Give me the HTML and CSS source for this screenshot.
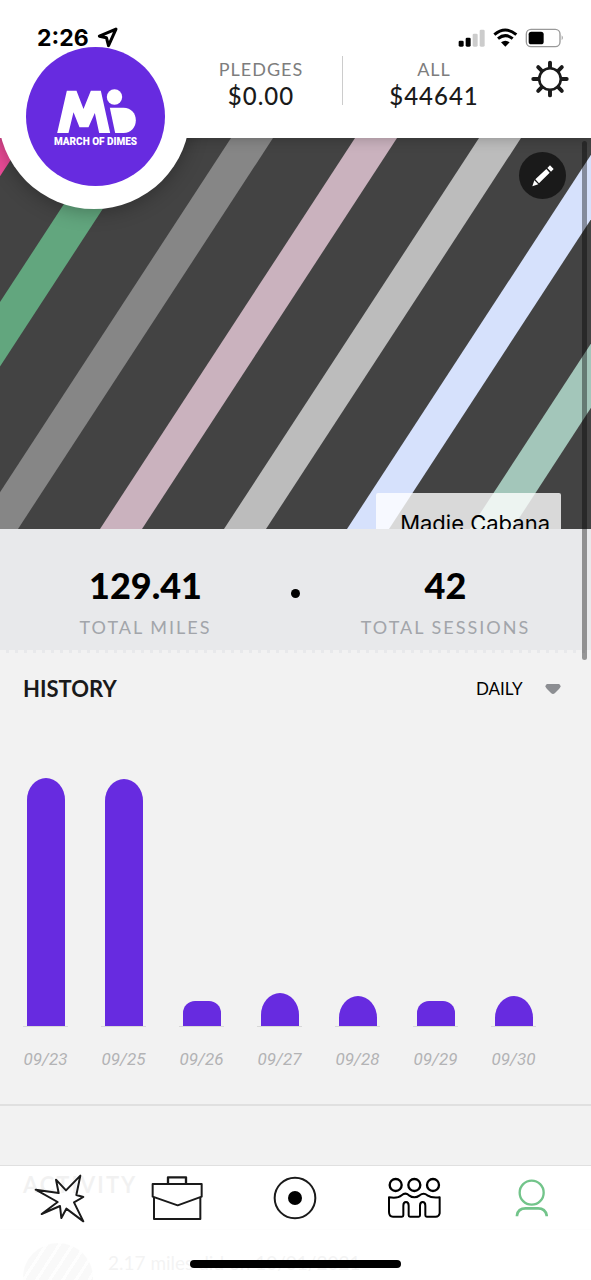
FILE: index.html
```html
<!DOCTYPE html>
<html lang="en">
<head>
<meta charset="utf-8">
<meta name="viewport" content="width=device-width, initial-scale=1">
<title>March of Dimes</title>
<link rel="stylesheet" href="styles.css">
</head>
<body>
<div class="app">
  <header class="header">
    <div class="brand">
      <div class="brand-disc">
        <svg class="brand-mark" viewBox="165 262 245 138" aria-hidden="true">
          <path d="M171 397L200 270H229L250 325L272 270H302L330 397H297L284 337L265 380H238L220 335L205 397Z"/>
          <circle cx="343" cy="289" r="23"/>
          <path d="M329 321H370C393 321 407 338 407 359S393 397 370 397H345Z"/>
        </svg>
        <span class="brand-name">MARCH OF DIMES</span>
      </div>
    </div>
    <div class="status">
      <span class="time">2:26</span>
      <svg class="arrow" viewBox="292 82 62 62" aria-hidden="true"><path d="M348 88L299 109L320 114L326 137Z"/></svg>
      <svg class="device" viewBox="772 82 318 60" aria-hidden="true">
        <rect x="774" y="120" width="15" height="18" rx="4"/>
        <rect x="795" y="111" width="15" height="27" rx="4"/>
        <rect x="816" y="99" width="15" height="39" rx="4" fill="#ccc"/>
        <rect x="837" y="87" width="15" height="51" rx="4" fill="#ccc"/>
        <path d="M881 102Q914 74 947 102M892 114Q914 96 936 114" fill="none" stroke="#000" stroke-width="9"/>
        <path d="M901 125Q914 116 927 125L914 138Z"/>
        <rect x="977" y="86" width="101" height="52" rx="14" fill="none" stroke="#999" stroke-width="4"/>
        <rect x="984" y="93" width="45" height="38" rx="8"/>
        <path d="M1083 104Q1090 111 1083 119Z" fill="#999"/>
      </svg>
    </div>
    <div class="totals">
      <div class="total"><span class="total-label">PLEDGES</span><span class="total-value">$0.00</span></div>
      <div class="total total-all"><span class="total-label">ALL</span><span class="total-value">$44641</span></div>
      <button class="settings" type="button" aria-label="Settings">
        <svg viewBox="992 178 116 116" aria-hidden="true">
          <circle cx="1050" cy="236" r="33"/>
          <path d="M1050 200V186M1050 272V286M1014 236H999M1086 236H1101M1025 211L1014 200M1075 211L1086 200M1025 261L1014 272M1075 261L1086 272"/>
        </svg>
      </button>
    </div>
  </header>

  <main>
    <section class="hero">
      <svg class="stripes" viewBox="0 0 591 391" preserveAspectRatio="xMidYMid slice" aria-hidden="true">
        <path fill="#ec4b98" d="M-16 0H25L-230 391H-271Z"/>
        <path fill="#62a67e" d="M107 0H149L-106 391H-148Z"/>
        <path fill="#868686" d="M231 0H273L18 391H-24Z"/>
        <path fill="#cab2be" d="M355 0H397L142 391H100Z"/>
        <path fill="#bcbcbc" d="M479 0H521L266 391H224Z"/>
        <path fill="#d6e1fc" d="M602 0H644L389 391H347Z"/>
        <path fill="#a3c6ba" d="M725 0H767L512 391H470Z"/>
      </svg>
      <button class="edit" type="button" aria-label="Edit cover">
        <svg viewBox="0 0 66 66" aria-hidden="true">
          <path d="M1 64L7 46L19 58ZM10 43L43 12L53 23L21 55ZM46 9L54 1L65 12L57 20Z"/>
        </svg>
      </button>
      <div class="name-tag">Madie Cabana</div>
    </section>

    <section class="stats">
      <div class="stat"><strong class="stat-value">129.41</strong><span class="stat-label">TOTAL MILES</span></div>
      <span class="stat-dot"></span>
      <div class="stat"><strong class="stat-value">42</strong><span class="stat-label">TOTAL SESSIONS</span></div>
    </section>

    <section class="history">
      <div class="history-head">
        <h2 class="history-title">HISTORY</h2>
        <div class="range">
          <select class="range-select" aria-label="History range"><option>DAILY</option></select>
          <svg class="caret" viewBox="0 0 16 11" aria-hidden="true"><path d="M2 0H14Q17 2 14 5L10 9Q8 11 6 9L2 5Q-1 2 2 0Z"/></svg>
        </div>
      </div>
      <div class="chart">
        <div class="day"><div class="bar" style="height:248px"></div><span class="date">09/23</span></div>
        <div class="day"><div class="bar" style="height:247px"></div><span class="date">09/25</span></div>
        <div class="day"><div class="bar bar-low" style="height:25px"></div><span class="date">09/26</span></div>
        <div class="day"><div class="bar" style="height:33px"></div><span class="date">09/27</span></div>
        <div class="day"><div class="bar" style="height:30px"></div><span class="date">09/28</span></div>
        <div class="day"><div class="bar bar-low" style="height:25px"></div><span class="date">09/29</span></div>
        <div class="day"><div class="bar" style="height:30px"></div><span class="date">09/30</span></div>
      </div>
    </section>

    <section class="activity">
      <h2 class="activity-title">ACTIVITY</h2>
      <div class="entry"><span class="avatar"></span><span class="entry-text">2.17 miles did on 10/01/2021</span></div>
    </section>
  </main>

  <div class="scrollbar"></div>

  <nav class="tabs">
    <div class="tab-row">
      <a class="tab" href="#feed" aria-label="Feed"><svg viewBox="87 249 180 150"><path stroke-width="6" d="M107 299L176 309L168 269L198 301L241 257L229 315L250 321L222 337L250 394L199 356L184 384L180 348L125 372L173 336Z"/></svg></a>
      <a class="tab" href="#work" aria-label="Work"><svg viewBox="441 249 180 150"><path stroke-width="6" d="M458 282H605V320L533 346L458 320ZM462 322V387H601V322"/><path stroke-width="7" d="M504 282V262H558V282"/></svg></a>
      <a class="tab" href="#record" aria-label="Record"><svg viewBox="796 249 180 150"><circle cx="886" cy="324" r="61" stroke-width="6"/><circle class="solid" cx="886" cy="324" r="21"/></svg></a>
      <a class="tab" href="#teams" aria-label="Teams"><svg class="group" viewBox="279 249 180 150"><g stroke-width="7"><circle cx="314" cy="285" r="18"/><circle cx="370" cy="285" r="18"/><circle cx="426" cy="285" r="18"/></g><path stroke-width="6" d="M294 322C311 325 324 323 332 316Q343 306 354 316Q370 328 386 316Q398 306 409 316C419 323 431 324 446 322V370Q444 380 434 380H407Q403 380 403 376V347Q403 336 395 336T387 347V376Q387 380 383 380H357Q353 380 353 376V347Q353 336 345 336T337 347V376Q337 380 333 380H306Q294 380 294 366Z"/></svg></a>
      <a class="tab" href="#profile" aria-label="Profile" aria-current="page"><svg class="profile" viewBox="633 249 180 150"><circle cx="722" cy="308" r="36" stroke-width="7"/><path stroke-width="8" stroke-linecap="butt" d="M678 379V376Q681 355 704 355H741Q763 355 767 376V379"/></svg></a>
    </div>
    <div class="home"></div>
  </nav>
</div>
</body>
</html>
```

FILE: styles.css
```css
* { box-sizing: border-box; }

body {
  margin: 0;
  background: #f2f2f2;
  color: #1a1a1a;
  font-family: Lato, "Liberation Sans", sans-serif;
}

button, select { font: inherit; color: inherit; border: 0; background: none; padding: 0; margin: 0; }
h2 { margin: 0; }
svg { display: block; }

.app { position: relative; height: 100vh; overflow: hidden; }

/* Header */
.header {
  position: relative;
  z-index: 2;
  height: 138px;
  background: #fff;
  box-shadow: 0 2px 12px rgba(0, 0, 0, .2);
}
/* Covers the part of the badge's shadow that falls on the header */
.header::before {
  content: "";
  position: absolute;
  inset: 0;
  z-index: 1;
  background: #fff;
}
.brand {
  position: absolute;
  left: -2px;
  top: 17px;
  width: 192px;
  height: 192px;
  border-radius: 50%;
  background: #fff;
  box-shadow: 0 2px 20px rgba(0, 0, 0, .3);
}
.brand-disc {
  position: absolute;
  z-index: 3;
  left: 28px;
  top: 30px;
  width: 139px;
  height: 139px;
  border-radius: 50%;
  background: #672be0;
  color: #fff;
  display: flex;
  flex-direction: column;
  align-items: center;
  padding-top: 41px;
}
.brand-mark { width: 82px; height: 46px; fill: #fff; }
.brand-name { font: 900 10px/16px Roboto, sans-serif; white-space: nowrap; }
.status {
  position: relative;
  z-index: 4;
  display: flex;
  align-items: center;
  height: 56px;
  padding: 19px 27px 0 37px;
}
.time { font: 700 23px/28px Inter, sans-serif; color: #000; }
.arrow { width: 21px; height: 21px; margin-left: 8px; fill: none; stroke: #000; stroke-width: 9; stroke-linejoin: round; }
.device { width: 106px; height: 20px; margin-left: auto; }
.totals {
  position: relative;
  z-index: 2;
  display: grid;
  grid-template-columns: 162fr 183fr 44px;
  margin-left: 180px;
  padding-right: 22px;
  align-items: start;
}
.total { display: flex; flex-direction: column; align-items: center; height: 49px; }
.total-all { border-left: 1px solid #ccc; }
.total-label { font-size: 18px; line-height: 26px; letter-spacing: 1px; color: #7d7d7d; }
.total-value { font-size: 24px; line-height: 28px; letter-spacing: 1px; font-weight: 500; }
.settings { justify-self: end; width: 38px; height: 38px; margin-top: 4px; }
.settings svg { fill: none; stroke: #1a1a1a; stroke-width: 8; stroke-linecap: round; }
.settings path { stroke-width: 12; }

/* Cover */
.hero { position: relative; height: 391px; overflow: hidden; background: #434343; }
.stripes { width: 100%; height: 100%; }
.edit {
  position: absolute;
  top: 14px;
  right: 25px;
  width: 47px;
  height: 47px;
  border-radius: 50%;
  background: #1a1a1a;
  display: grid;
  place-items: center;
}
.edit svg { width: 22px; height: 22px; fill: #fff; }
.name-tag {
  position: absolute;
  top: 355px;
  right: 30px;
  padding: 12px 11px 12px 24px;
  border-radius: 2px;
  background: rgba(255, 255, 255, .8);
  color: #000;
  font: 400 22px/36px Inter, sans-serif;
}

/* Stats */
.stats {
  display: grid;
  grid-template-columns: 1fr 9px 1fr;
  height: 124px;
  padding-top: 34px;
  background: #e8e9eb;
  border-bottom: 3px dashed #f2f2f2;
}
.stat { display: flex; flex-direction: column; align-items: center; }
.stat-value { font-size: 36px; line-height: 44px; font-weight: 900; color: #000; }
.stat-label { font-size: 18px; line-height: 40px; letter-spacing: 2px; color: #a2a5aa; }
.stat-dot { width: 9px; height: 9px; margin-top: 26px; border-radius: 50%; background: #000; }

/* History */
.history { height: 453px; border-bottom: 2px solid #e0e0e0; }
.history-head { display: flex; justify-content: space-between; align-items: center; padding: 20px 30px 0 23px; }
.history-title { font-size: 22px; line-height: 32px; font-weight: 700; }
.range { display: flex; align-items: center; gap: 22px; }
.range-select { appearance: none; font-size: 17px; line-height: 32px; color: #000; }
.caret { width: 16px; height: 11px; fill: #8c8e92; }
.chart { display: flex; justify-content: space-between; align-items: flex-end; margin-top: 73px; padding: 0 55px 0 23px; }
.day { width: 45px; display: flex; flex-direction: column; align-items: center; }
.bar { width: 38px; border-radius: 19px 19px 0 0 / 22px 22px 0 0; background: #672be0; }
.bar-low { border-radius: 12px 12px 0 0; }
.date {
  width: 45px;
  border-top: 1px solid #d8d8d8;
  padding-top: 19px;
  text-align: center;
  color: #b3b3b5;
  font: italic 400 17px/26px Roboto, sans-serif;
}

/* Activity */
.activity-title { padding: 59px 23px 24px; font-size: 22px; line-height: 40px; letter-spacing: 2px; border-bottom: 1px solid #ddd; }
.entry { display: flex; align-items: flex-start; gap: 15px; padding: 13px 23px; }
.avatar {
  flex: none;
  width: 70px;
  height: 70px;
  border-radius: 50%;
  background: repeating-linear-gradient(123deg, #999 0 8px, #eee 8px 11px);
}
.entry-text { font-size: 19px; line-height: 40px; color: #333; white-space: nowrap; }

.scrollbar {
  position: absolute;
  z-index: 3;
  top: 141px;
  right: 4px;
  width: 5px;
  height: 519px;
  border-radius: 3px;
  background: rgba(0, 0, 0, .38);
}

/* Tab bar */
.tabs {
  position: fixed;
  z-index: 4;
  left: 0;
  right: 0;
  bottom: 0;
  height: 115px;
  border-top: 1px solid #e0e0e0;
  background: rgba(255, 255, 255, .94);
}
.tab-row { display: grid; grid-template-columns: repeat(5, 1fr); padding-top: 7px; }
.tab { display: grid; place-items: center; }
.tab svg { width: 60px; height: 50px; fill: none; stroke: #1a1a1a; stroke-linejoin: round; }
.tab .solid { fill: #000; stroke: none; }
.tab .group { stroke: #000; }
.tab .profile { stroke: #72c48a; }
.home { width: 211px; height: 8px; margin: 37px auto 0; border-radius: 4px; background: #000; }
```
